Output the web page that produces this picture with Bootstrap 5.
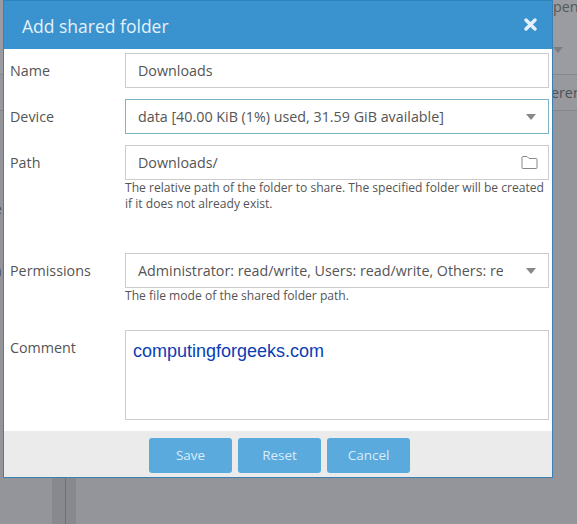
<!DOCTYPE html>
<html lang="en">
<head>
<meta charset="utf-8">
<title>Add shared folder</title>
<link href="https://cdn.jsdelivr.net/npm/bootstrap@5.3.0/dist/css/bootstrap.min.css" rel="stylesheet">
<style>
html,body{height:100%;margin:0;overflow:hidden}
body{background:#93959b;font-family:"Open Sans",sans-serif;font-size:14.3px;color:#555}
.backdrop-page{position:relative;height:524px;width:577px;overflow:hidden;color:#4e5156}
.bg-top{height:75px;padding-left:553px;line-height:14px;white-space:nowrap;overflow:hidden;background:#9a9ca1;color:#55585c;border-bottom:1px solid #85878d}
.bg-second{height:36px;padding:8px 0 0 551px;line-height:20px;white-space:nowrap;overflow:hidden;border-bottom:1px solid #85878d;background:#97999e}
.bg-caret{position:absolute;left:553px;top:47px;width:0;height:0;border-left:5px solid transparent;border-right:5px solid transparent;border-top:6px solid #7b7d82}
.bg-band{position:absolute;left:52px;top:478px;width:24px;height:46px;background:#88898f}
.bg-line{position:absolute;left:65px;top:478px;width:1px;height:46px;background:#3f7fb0}
.bg-frag{position:absolute;left:-6px;font-size:14px;line-height:18px;color:#4e5156}
.win{position:absolute;left:3px;top:0;width:550px;height:478px;border:1px solid #3b7fb3;border-top:0;background:#fff}
.win-head{height:49px;background:#3a92ce;border-top:1px solid #2f82bd;padding:2px 15px 0 18px;color:#e4f1fa;font-size:17.5px}
.win-close{background:none;border:0;padding:0 0 3px;line-height:0}
.win-body{height:382px;padding:4px 3px 0 6px}
.fld-label{width:115px;flex:none;color:#555;line-height:20px;padding-top:8px}
.fld-main{flex:1 1 auto;min-width:0}
.fld{height:35px;border:1px solid #ccc;background:#fff;padding:0 12px;line-height:33px;color:#555;white-space:nowrap;overflow:hidden}
.fld-focus{border-color:#7db4c6}
.fld-area{height:90px;font-family:"Liberation Sans",sans-serif;font-size:18px;color:#0b3db4;padding:0 7px;line-height:40px}
.fld-hint{font-size:12.1px;line-height:16px;color:#555;height:73px}
.fld-hint.fld-hint-b{height:42px}
.spacer-row{margin-bottom:11px}
.caret-dn{width:0;height:0;border-left:5px solid transparent;border-right:5px solid transparent;border-top:6px solid #888;flex:none;margin-left:8px}
.caret-far{margin-left:23px}
.fld-clip{overflow:hidden;flex:1 1 auto;min-width:0}
.pad-r{padding-right:12px}
.pad-ic{padding-right:10px}
.win-foot{height:46px;background:#ebebeb;padding:7px 0 0 3px;gap:6px}
.act{width:83px;height:35px;background:#5aaade;border:0;border-radius:3px;color:#d9ecf8;font-size:13.5px;padding:0;line-height:35px}
.act:hover{background:#5aaade;color:#d9ecf8}
</style>
</head>
<body>
<div class="backdrop-page">
  <div class="bg-top">peni</div>
  <div class="bg-second">eren</div>
  <div class="bg-caret"></div>
  <div class="bg-band"></div>
  <div class="bg-line"></div>
  <div class="bg-frag" style="top:200px">e</div>
  <div class="bg-frag" style="top:262px">a</div>

  <div class="win">
    <div class="win-head d-flex align-items-center justify-content-between">
      <span>Add shared folder</span>
      <button class="win-close" type="button" aria-label="Close">
        <svg width="13" height="13" viewBox="0 0 13 13"><path d="M2 2 L11 11 M11 2 L2 11" stroke="#e4f1fa" stroke-width="3.4" stroke-linecap="round"/></svg>
      </button>
    </div>
    <div class="win-body">
      <div class="d-flex spacer-row">
        <div class="fld-label">Name</div>
        <div class="fld-main"><div class="fld">Downloads</div></div>
      </div>
      <div class="d-flex spacer-row">
        <div class="fld-label">Device</div>
        <div class="fld-main"><div class="fld fld-focus d-flex align-items-center pad-r"><div class="fld-clip">data [40.00 KiB (1%) used, 31.59 GiB available]</div><i class="caret-dn"></i></div></div>
      </div>
      <div class="d-flex">
        <div class="fld-label">Path</div>
        <div class="fld-main">
          <div class="fld d-flex align-items-center pad-ic"><div class="fld-clip">Downloads/</div>
            <svg width="17" height="15" viewBox="0 0 17 15" fill="none" stroke="#888" stroke-width="1"><path d="M1 12.500V2.500Q1 1.500 2 1.500H6L8 3.500H15Q16 3.500 16 4.500V12.500Q16 13.500 15 13.500H2Q1 13.500 1 12.500Z"/></svg>
          </div>
          <div class="fld-hint">The relative path of the folder to share. The specified folder will be created if it does not already exist.</div>
        </div>
      </div>
      <div class="d-flex">
        <div class="fld-label">Permissions</div>
        <div class="fld-main">
          <div class="fld d-flex align-items-center pad-r"><div class="fld-clip">Administrator: read/write, Users: read/write, Others: read-only</div><i class="caret-dn caret-far"></i></div>
          <div class="fld-hint fld-hint-b">The file mode of the shared folder path.</div>
        </div>
      </div>
      <div class="d-flex">
        <div class="fld-label">Comment</div>
        <div class="fld-main"><div class="fld fld-area">computingforgeeks.com</div></div>
      </div>
    </div>
    <div class="win-foot d-flex justify-content-center">
      <button class="btn act" type="button">Save</button>
      <button class="btn act" type="button">Reset</button>
      <button class="btn act" type="button">Cancel</button>
    </div>
  </div>
</div>
<script src="https://cdn.jsdelivr.net/npm/bootstrap@5.3.0/dist/js/bootstrap.bundle.min.js"></script>
</body>
</html>
